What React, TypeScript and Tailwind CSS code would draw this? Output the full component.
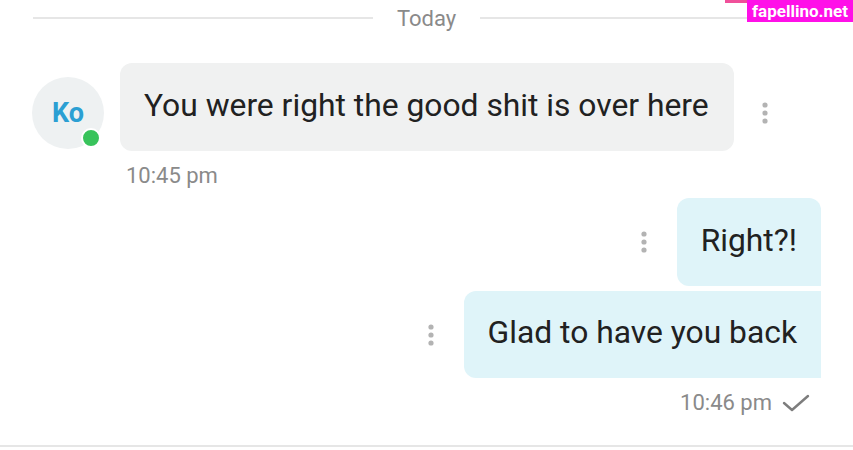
import React from "react";

const Dots: React.FC = () => (
  <svg width="6" height="22" viewBox="0 0 6 22" className="shrink-0">
    <circle cx="3" cy="3" r="2.6" fill="#b3b3b3" />
    <circle cx="3" cy="11" r="2.6" fill="#b3b3b3" />
    <circle cx="3" cy="19" r="2.6" fill="#b3b3b3" />
  </svg>
);

export default function App() {
  return (
    <div
      className="relative w-[853px] h-[450px] bg-white overflow-hidden"
      style={{ fontFamily: "Roboto, 'Liberation Sans', sans-serif" }}
    >
      {/* watermark */}
      <div className="absolute top-0 right-0 h-[22px] w-[106px] bg-[#ff10e8] text-white text-[17px] font-bold leading-[22px] text-center whitespace-nowrap">
        fapellino.net
      </div>
      <div className="absolute top-0 right-[106px] h-[3px] w-[22px] bg-[#f0509a]" />

      {/* day divider */}
      <div className="flex items-center h-9 px-[33px] gap-6">
        <div className="flex-1 h-[2px] bg-[#e6e6e6]" />
        <span className="text-[22px] text-[#8a8a8a]">Today</span>
        <div className="flex-1 h-[2px] bg-[#e6e6e6]" />
      </div>

      {/* incoming */}
      <div className="flex items-start pl-8 mt-[27px]">
        <div className="relative mt-[14px] w-[72px] h-[72px] rounded-full bg-[#eef1f2] flex items-center justify-center shrink-0">
          <span className="text-[27px] font-bold text-[#2b9fd3]">Ko</span>
          <div className="absolute left-[49px] top-[51px] w-[20px] h-[20px] rounded-full bg-[#38c35b] border-2 border-white" />
        </div>
        <div className="ml-4 w-[614px] h-[88px] rounded-[12px] bg-[#f0f1f1] flex items-center px-6 pb-[3px]">
          <span className="text-[31.8px] text-[#212121] whitespace-nowrap">You were right the good shit is over here</span>
        </div>
        <div className="ml-[28px] mt-[39px]">
          <Dots />
        </div>
      </div>
      <div className="pl-[126px] mt-[13px] text-[22px] leading-6 text-[#8a8a8a]">10:45 pm</div>

      {/* outgoing */}
      <div className="flex flex-col items-end pr-8 mt-[10px] gap-[5px]">
        <div className="flex items-center gap-[30px]">
          <Dots />
          <div className="h-[88px] rounded-tl-[12px] rounded-tr-[12px] rounded-bl-[12px] bg-[#dff4f9] flex items-center px-6 pb-[3px]">
            <span className="text-[31.8px] text-[#212121]">Right?!</span>
          </div>
        </div>
        <div className="flex items-center gap-[30px]">
          <Dots />
          <div className="h-[87px] rounded-bl-[12px] rounded-tl-[12px] bg-[#dff4f9] flex items-center px-6 pb-[3px]">
            <span className="text-[31.8px] text-[#212121]">Glad to have you back</span>
          </div>
        </div>
        <div className="flex items-center mt-[8px] pr-[11px] gap-[10px]">
          <span className="text-[22px] leading-6 text-[#8a8a8a]">10:46 pm</span>
          <svg width="28" height="18" viewBox="0 0 28 18">
            <path d="M2 9 L10 16 L26 2" fill="none" stroke="#7d7d7d" strokeWidth="2.4" strokeLinecap="round" strokeLinejoin="round" />
          </svg>
        </div>
      </div>

      {/* bottom rule */}
      <div className="absolute left-0 right-0 top-[445px] h-[2px] bg-[#e6e6e6]" />
    </div>
  );
}
